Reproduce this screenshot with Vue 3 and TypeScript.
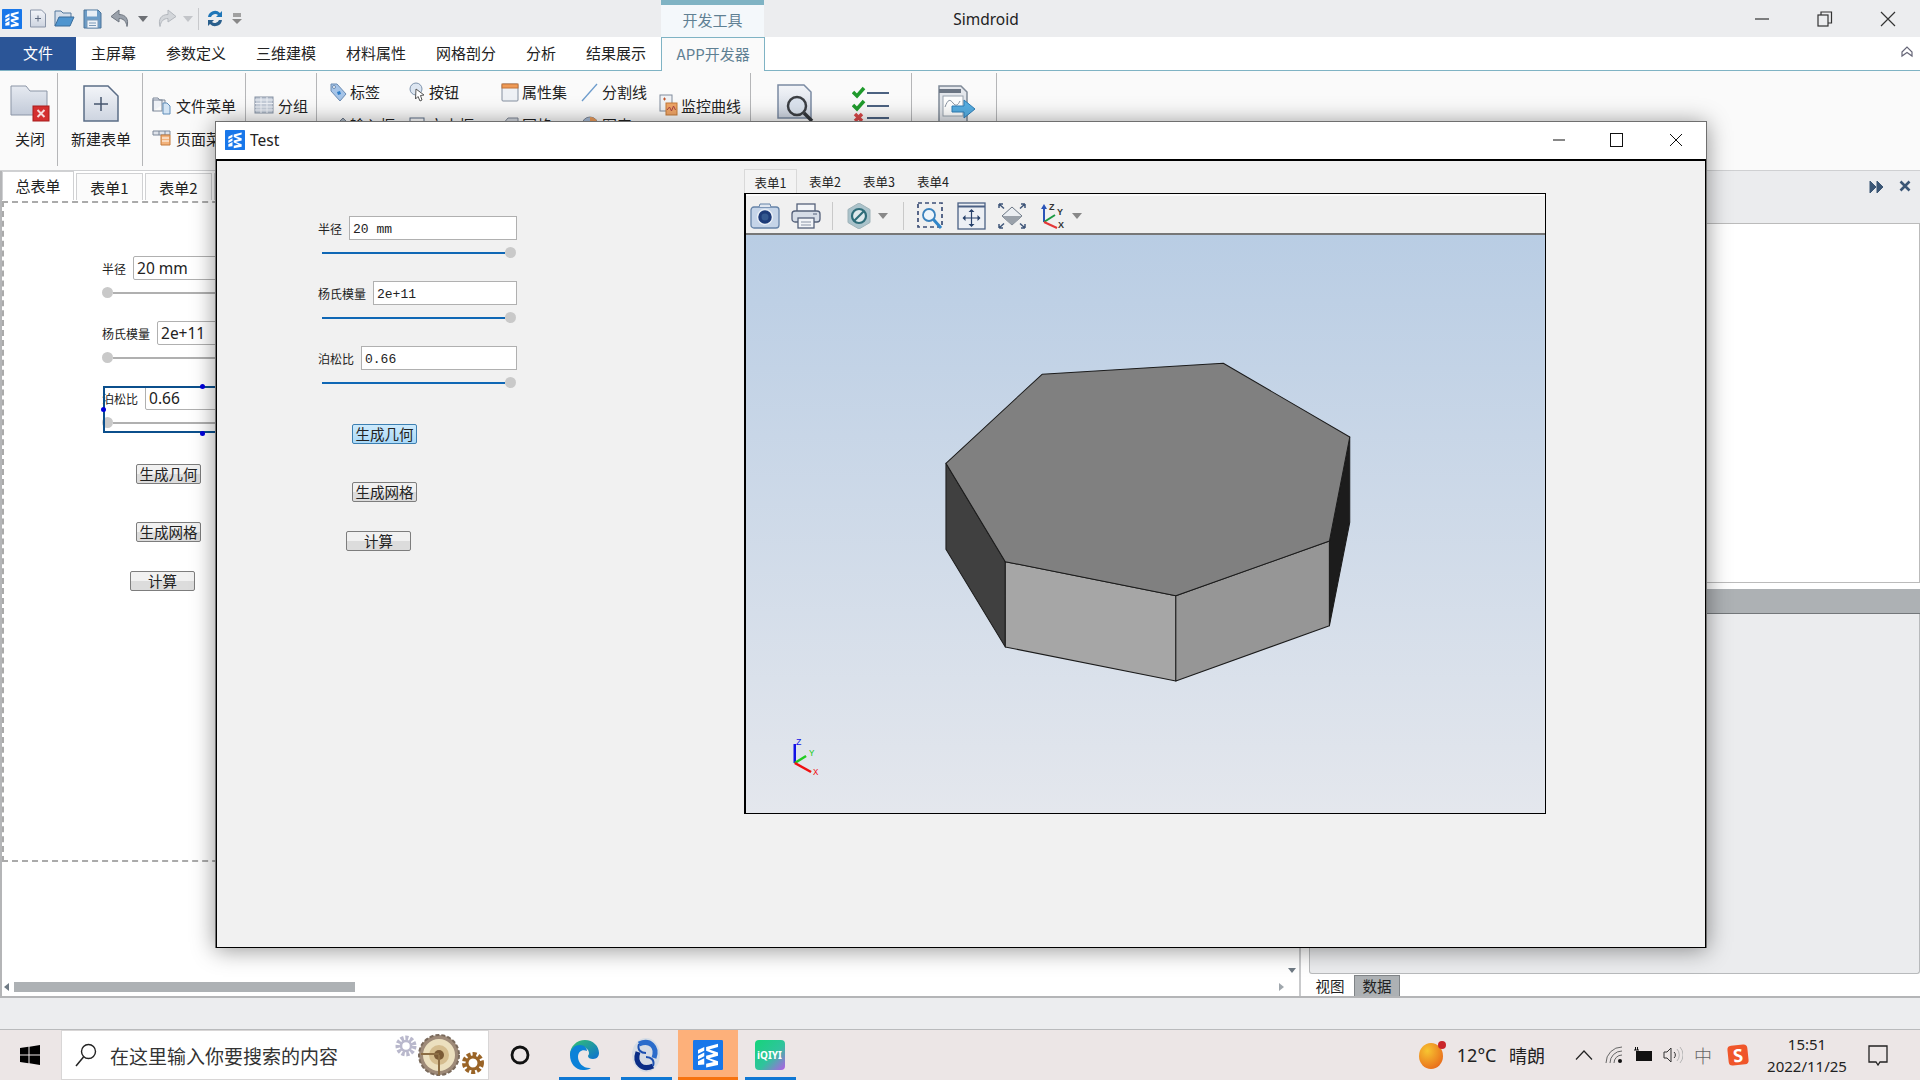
<script setup lang="ts">
interface Field { label: string; back: string; front: string }
const fields: Field[] = [
  { label: '半径', back: '20 mm', front: '20 mm' },
  { label: '杨氏模量', back: '2e+11', front: '2e+11' },
  { label: '泊松比', back: '0.66', front: '0.66' },
]
const menus = ['主屏幕', '参数定义', '三维建模', '材料属性', '网格剖分', '分析', '结果展示']
const backTabs = ['总表单', '表单1', '表单2']
const viewTabs = ['表单1', '表单2', '表单3', '表单4']
</script>

<template>
  <div class="screen">
    <svg class="defs" width="0" height="0" aria-hidden="true">
      <defs>
        <linearGradient id="paper" x1="0" y1="0" x2="0" y2="1">
          <stop offset="0" stop-color="#f3f5f9" />
          <stop offset="1" stop-color="#cdd4e0" />
        </linearGradient>
        <linearGradient id="folder" x1="0" y1="0" x2="0" y2="1">
          <stop offset="0" stop-color="#e6eaf1" />
          <stop offset="1" stop-color="#c2cad8" />
        </linearGradient>
        <linearGradient id="edge" x1="0" y1="0" x2="1" y2="1">
          <stop offset="0" stop-color="#36c46f" />
          <stop offset="1" stop-color="#0b6fd3" />
        </linearGradient>
        <radialGradient id="sun" cx=".35" cy=".3" r=".8">
          <stop offset="0" stop-color="#f7c531" />
          <stop offset="1" stop-color="#e8681a" />
        </radialGradient>
        <symbol id="logo" viewBox="0 0 24 24">
          <rect width="24" height="24" rx="1" fill="#1877ea" />
          <path fill="#fff" d="M4 8l5-2.500v3L4 11zM4 12.500l5-2.500v3l-5 2.500zM4 17l5-2.500v5L4 20zM10.500 5.500L20 3v2.500l-7 2 7 2.500v2.500l-7 2 7 2.500V20l-9.500 2v-3l6-1.500-6-2.500v-2.500l6-1.500-6-2.500z" />
        </symbol>
      </defs>
    </svg>

    <!-- title bar -->
    <header class="titlebar">
      <div class="quick">
        <svg class="q-logo" width="20" height="20"><use href="#logo" /></svg>
        <svg class="q-new" width="18" height="19" viewBox="0 0 18 19"><path d="M1.500 1h11l4 4v13h-15z" fill="url(#paper)" stroke="#8a95a8" /><path d="M9 6.500v6M6 9.500h6" stroke="#5f6b80" /></svg>
        <svg class="q-open" width="21" height="19" viewBox="0 0 21 19"><path d="M1 17V2h6l2 2h8v4" fill="#d4deea" stroke="#55789c" /><path d="M1 17l4-9h15l-4 9z" fill="#4f95cf" stroke="#3a6d9b" /></svg>
        <svg class="q-save" width="19" height="20" viewBox="0 0 19 20"><path d="M1 1h14l3 3v15H1z" fill="#6c9cc7" stroke="#4a7398" /><rect x="4" y="1.500" width="10" height="6" fill="#e8eef5" /><rect x="4" y="11" width="11" height="8" fill="#eef2f7" stroke="#7a99b8" /><path d="M6 14h7M6 16.500h7" stroke="#7a99b8" /></svg>
        <svg class="q-undo" width="20" height="19" viewBox="0 0 20 19"><path d="M9 1L1 7.500 9 13V9.500c4 0 7 2 8 8 2-7-1-12-8-12z" fill="#9aa1ab" stroke="#6f7680" /></svg>
        <i class="tri dark q-d1"></i>
        <svg class="q-redo" width="20" height="19" viewBox="0 0 20 19"><path d="M11 1l8 6.500L11 13V9.500c-4 0-7 2-8 8-2-7 1-12 8-12z" fill="#d3d6da" stroke="#b3b7bd" /></svg>
        <i class="tri pale q-d2"></i>
        <span class="q-sep"></span>
        <svg class="q-refresh" width="18" height="21" viewBox="0 0 18 21"><path d="M2 9a7 7 0 0 1 12-4l2-2v6h-6l2-2a4.500 4.500 0 0 0-7 2z" fill="#1f76b8" /><path d="M16 12a7 7 0 0 1-12 4l-2 2v-6h6l-2 2a4.500 4.500 0 0 0 7-2z" fill="#2a5f8c" /></svg>
        <svg class="q-more" width="10" height="14" viewBox="0 0 10 14"><path d="M1 2h8M1 4h8" stroke="#888" stroke-width="1.500" /><path d="M0 7h10l-5 5z" fill="#888" /></svg>
      </div>
      <div class="context-tab">开发工具</div>
      <div class="app-title">Simdroid</div>
      <div class="win-ctrl">
        <span><svg width="16" height="16"><path d="M1 8h14" stroke="#333" stroke-width="1.200" /></svg></span>
        <span><svg width="16" height="16"><rect x="1" y="4" width="10" height="11" fill="none" stroke="#333" stroke-width="1.200" /><path d="M4 4V1h10.500v11H11" fill="none" stroke="#333" stroke-width="1.200" /></svg></span>
        <span><svg width="16" height="16"><path d="M1 1l14 14M15 1L1 15" stroke="#333" stroke-width="1.200" /></svg></span>
      </div>
    </header>

    <!-- menu -->
    <nav class="menubar">
      <div class="menu-file">文件</div>
      <div v-for="m in menus" :key="m" class="menu-item">{{ m }}</div>
      <div class="menu-active">APP开发器</div>
      <svg class="collapse" width="12" height="12" viewBox="0 0 12 12"><path d="M1 6L6 1l5 5v4L6 6.500 1 10z" fill="none" stroke="#667" stroke-width="1.200" /></svg>
    </nav>

    <!-- ribbon -->
    <section class="ribbon">
      <div class="group g1">
        <svg width="40" height="37" viewBox="0 0 40 37"><path d="M1 30V1h15l4 5h17v24z" fill="url(#folder)" stroke="#8b95a6" /><rect x="23" y="21" width="16" height="15" fill="#d42f2f" stroke="#a81d1d" /><path d="M27.500 25l7 7M34.500 25l-7 7" stroke="#f6dada" stroke-width="2" /></svg>
        <span class="big-label">关闭</span>
      </div>
      <div class="group g2">
        <svg width="36" height="37" viewBox="0 0 36 37"><path d="M1 1h24l10 10v25H1z" fill="url(#paper)" stroke="#5b6d87" stroke-width="1.500" /><path d="M18 12v14M11 19h14" stroke="#46566e" stroke-width="1.500" /></svg>
        <span class="big-label">新建表单</span>
      </div>
      <div class="group g3">
        <div class="rb-item"><svg width="20" height="20" viewBox="0 0 20 20"><path d="M1 16V3h5l1.500 2H13v3" fill="#eef1f6" stroke="#7d8899" /><rect x="1" y="5" width="9" height="11" fill="none" stroke="#7d8899" /><path d="M11 8h4l3 3v8h-7z" fill="#d3e4f4" stroke="#5e8cb8" /></svg>文件菜单</div>
        <div class="rb-item"><svg width="20" height="20" viewBox="0 0 20 20"><path d="M1 3h17v4H1z" fill="#dfe3ea" stroke="#7d8899" /><path d="M7 3v4M13 3v4" stroke="#7d8899" /><path d="M9 7h9v10H9z" fill="#f3b27a" stroke="#c27b3c" /><path d="M10 10h7M10 13h7" stroke="#fff" /></svg>页面菜单</div>
      </div>
      <div class="group g4">
        <div class="rb-item"><svg width="20" height="20" viewBox="0 0 20 20"><rect x="1" y="2" width="18" height="16" fill="#c5cdd9" stroke="#8490a2" /><path d="M1 5h18M7 2v16M13 2v16M1 8.500h18M1 12h18M1 15h18" stroke="#eef1f6" /></svg>分组</div>
      </div>
      <div class="group g5">
        <div class="rb-grid">
          <div class="rb-cell"><svg width="18" height="20" viewBox="0 0 18 20"><path d="M2 2h6l9 10-6 7-9-10z" fill="#a5c4e8" stroke="#6b8bb2" /><circle cx="5" cy="5" r="1.500" fill="#fff" stroke="#6b8bb2" /><path d="M8 10l3-1 1 3-3 1z" fill="#2f7fc9" /></svg>标签</div>
          <div class="rb-cell"><svg width="18" height="20" viewBox="0 0 18 20"><circle cx="8" cy="7" r="6" fill="#dde6f1" stroke="#7e94ad" /><path d="M8 7l8 6-3.500.5L14 18l-2 1-2-4.500-2.500 2.500z" fill="#fff" stroke="#555" /></svg>按钮</div>
          <div class="rb-cell"><svg width="18" height="20" viewBox="0 0 18 20"><rect x="1" y="2" width="16" height="17" rx="1" fill="#eef1f5" stroke="#8590a0" /><rect x="1" y="2" width="16" height="4" fill="#ef9a56" stroke="#c2753a" /></svg>属性集</div>
          <div class="rb-cell"><svg width="18" height="20" viewBox="0 0 18 20"><path d="M1 19L16 2" stroke="#6d9ccc" stroke-width="1.300" /></svg>分割线</div>
          <div class="rb-cell"><svg width="18" height="20" viewBox="0 0 18 20"><path d="M2 18l2-5L14 3l3 3L7 16z" fill="#a9b4c2" stroke="#6f7b8c" /></svg>输入框</div>
          <div class="rb-cell"><svg width="18" height="20" viewBox="0 0 18 20"><rect x="2" y="3" width="14" height="14" fill="#fff" stroke="#5d6f88" /><path d="M6 7h6M9 7v7" stroke="#5d6f88" /></svg>文本框</div>
          <div class="rb-cell"><svg width="18" height="20" viewBox="0 0 18 20"><path d="M1 10l6-7h10v12H1z" fill="#d5d9e0" stroke="#7e8796" /></svg>网格</div>
          <div class="rb-cell"><svg width="18" height="20" viewBox="0 0 18 20"><circle cx="9" cy="10" r="8" fill="#a8bdd8" stroke="#7e8796" /><path d="M9 10V2a8 8 0 0 1 8 8z" fill="#ed9c5a" /></svg>图表</div>
        </div>
        <div class="rb-item monitor"><svg width="19" height="22" viewBox="0 0 19 22"><rect x="1" y="1" width="12" height="16" fill="#f1f3f6" stroke="#808b9c" /><path d="M4 5h3M5.500 3.500v3" stroke="#c2562d" /><rect x="7" y="9" width="11" height="12" fill="#f0a566" stroke="#c47a38" /><path d="M8 16l2.500-3 2 4 2-5 2 4" fill="none" stroke="#a44" /></svg>监控曲线</div>
      </div>
      <div class="group g6">
        <svg width="38" height="38" viewBox="0 0 38 38"><path d="M1 1h26l7 7v26H1z" fill="url(#paper)" stroke="#7b8ba3" stroke-width="1.500" /><circle cx="20" cy="22" r="9" fill="#dbe3ee" stroke="#3c3f44" stroke-width="2.500" /><path d="M27 29l8 8" stroke="#33363b" stroke-width="3.500" /></svg>
        <svg class="check" width="38" height="36" viewBox="0 0 38 36"><path d="M1 6l4 4 7-8" fill="none" stroke="#1f9a2c" stroke-width="3.500" /><path d="M1 19l4 4 7-8" fill="none" stroke="#1f9a2c" stroke-width="3.500" /><path d="M3 28l7 7M10 28l-7 7" stroke="#d84848" stroke-width="3.500" /><path d="M15 7h22M15 20h22M15 32h22" stroke="#4c6281" stroke-width="2" /></svg>
      </div>
      <div class="group g7">
        <svg width="38" height="38" viewBox="0 0 38 38"><path d="M1 1h22l6 6v30H1z" fill="#e3e6eb" stroke="#808a98" stroke-width="1.500" /><path d="M1 6h22" stroke="#6c7684" stroke-width="4" /><rect x="5" y="11" width="20" height="20" fill="#fff" stroke="#9aa3af" /><path d="M7 22c3-8 5-8 8-4s5 2 7-2" fill="none" stroke="#8b95a3" /><path d="M14 21h12v-6l11 9-11 9v-6H14z" fill="#57aee2" stroke="#2f7fb8" /></svg>
      </div>
    </section>

    <!-- body behind the dialog -->
    <main class="body">
      <section class="left-pane">
        <div class="back-tabs">
          <div v-for="(t, i) in backTabs" :key="t" class="back-tab" :class="{ on: i === 0 }">{{ t }}</div>
          <div class="back-tab stub"></div>
        </div>
        <div class="canvas">
          <div class="form back">
            <div v-for="(f, i) in fields" :key="f.label" class="field" :class="{ selected: i === 2 }">
              <div class="field-top">
                <span class="label">{{ f.label }}</span>
                <span class="value">{{ f.back }}</span>
              </div>
              <div class="slider"><i class="thumb"></i><i class="track"></i></div>
              <template v-if="i === 2">
                <i class="sel-box"></i>
                <i class="grip top"></i><i class="grip side"></i><i class="grip bottom"></i>
              </template>
            </div>
            <button class="btn b1">生成几何</button>
            <button class="btn b2">生成网格</button>
            <button class="btn b3">计算</button>
          </div>
        </div>
        <div class="hscroll-zone">
          <div class="arrow-down"></div>
          <div class="hscroll">
            <i class="arr-l"></i>
            <i class="scroll-thumb"></i>
            <i class="arr-r"></i>
          </div>
        </div>
      </section>
      <section class="right-pane">
        <div class="rp-head">
          <svg width="15" height="14" viewBox="0 0 15 14"><path d="M1 1l6 6-6 6zM8 1l6 6-6 6z" fill="#3b5675" stroke="#3b5675" /></svg>
          <svg width="12" height="12" viewBox="0 0 12 12"><path d="M1.500 1.500l9 9M10.500 1.500l-9 9" stroke="#3b5675" stroke-width="2.600" /></svg>
        </div>
        <div class="rp-panel"></div>
        <div class="rp-bar"></div>
        <div class="rp-rest"></div>
        <div class="rp-tabs">
          <span class="rp-tab">视图</span>
          <span class="rp-tab on">数据</span>
        </div>
      </section>
    </main>

    <footer class="status"></footer>

    <!-- taskbar -->
    <div class="taskbar">
      <div class="start"><svg width="20" height="20" viewBox="0 0 20 20"><path d="M0 3l8.500-1.200V9.500H0zM9.500 1.700L20 0v9.500H9.500zM0 10.500h8.500v7.700L0 17zM9.500 10.500H20V20L9.500 18.300z" fill="#000" /></svg></div>
      <div class="search">
        <svg width="24" height="26" viewBox="0 0 24 26"><circle cx="14.500" cy="9.500" r="7" fill="none" stroke="#222" stroke-width="1.400" /><path d="M9.500 15L2 24" stroke="#222" stroke-width="1.500" /></svg>
        <span class="search-text">在这里输入你要搜索的内容</span>
        <svg class="gears" width="92" height="48" viewBox="0 0 92 48">
          <circle cx="12" cy="15" r="8" fill="none" stroke="#b9b8cc" stroke-width="5" stroke-dasharray="3 1.600" />
          <circle cx="12" cy="15" r="5" fill="none" stroke="#b9b8cc" stroke-width="2.500" />
          <circle cx="45" cy="24" r="20" fill="#9e8a78" stroke="#7a6a5c" stroke-width="2" stroke-dasharray="4 2" />
          <circle cx="45" cy="24" r="16" fill="#ece0bf" />
          <circle cx="45" cy="24" r="10" fill="#d5bd8f" />
          <circle cx="45" cy="24" r="5" fill="#7a5a36" />
          <path d="M27 23h18M45 24v20" stroke="#8c6d44" stroke-width="2" />
          <circle cx="79" cy="32" r="8" fill="none" stroke="#9a6427" stroke-width="6" stroke-dasharray="3.500 1.800" />
          <circle cx="79" cy="32" r="6" fill="none" stroke="#9a6427" stroke-width="3" />
        </svg>
      </div>
      <div class="cortana"><svg width="22" height="22"><circle cx="11" cy="11" r="8" fill="none" stroke="#111" stroke-width="2.800" /></svg></div>
      <div class="task t-edge">
        <svg width="32" height="32" viewBox="0 0 32 32"><path d="M2 16C2 7 9 1 17 1c8 0 14 6 14 13 0 3-2 6-6 6-3 0-5-1-5-3 0-1 1-1 1-3 0-3-3-6-7-6-6 0-10 5-10 10z" fill="url(#edge)" /><path d="M2 16c0-5 4-10 10-10 4 0 7 3 7 6-5-2-9 1-9 6 0 6 6 12 13 11-3 2-6 2-8 2C7 31 2 24 2 16z" fill="#0c82d8" /></svg>
      </div>
      <div class="task t-360">
        <svg width="30" height="36" viewBox="0 0 30 36"><ellipse cx="15" cy="18" rx="14" ry="17" fill="#d6dce4" /><path d="M8 7C19 2 27 10 23 21" fill="none" stroke="#2a6ccb" stroke-width="5" /><path d="M22 29C11 34 3 26 7 15" fill="none" stroke="#0a2d86" stroke-width="5" /><path d="M8 7c-2 6 2 9 7 9M22 29c2-6-2-9-7-9" fill="none" stroke="#1b4fb0" stroke-width="2" /></svg>
      </div>
      <div class="task t-sim"><svg width="30" height="30"><use href="#logo" /></svg></div>
      <div class="task t-iq"><span class="iq-badge">iQIYI</span></div>
      <div class="tray">
        <svg class="sun" width="28" height="30" viewBox="0 0 28 30"><ellipse cx="13" cy="16" ry="13" rx="12" fill="url(#sun)" /><circle cx="24" cy="5" r="4" fill="#c9252a" /></svg>
        <span class="temp">12°C</span>
        <span class="weather">晴朗</span>
        <svg class="chev" width="18" height="10" viewBox="0 0 18 10"><path d="M1 9.500L9 1l8 8.500" fill="none" stroke="#222" stroke-width="1.200" /></svg>
        <svg class="wifi" width="18" height="18" viewBox="0 0 18 18"><path d="M1 17A16 16 0 0 1 17 1M5 17A12 12 0 0 1 17 5M9 17a8 8 0 0 1 8-8" fill="none" stroke="#666" stroke-width="1" /><circle cx="15" cy="15" r="2" fill="#111" /></svg>
        <svg class="batt" width="20" height="16" viewBox="0 0 20 16"><rect x="3.500" y="4.500" width="15" height="9" fill="#111" stroke="#111" /><path d="M1 3h5M2.500 0v3M4.500 0v3" stroke="#111" /></svg>
        <svg class="spk" width="20" height="18" viewBox="0 0 20 18"><path d="M1 6h3l4-4v14l-4-4H1z" fill="none" stroke="#333" /><path d="M11 6a4 4 0 0 1 0 6" fill="none" stroke="#333" /><path d="M14 3a9 9 0 0 1 0 12M17 1a12 12 0 0 1 0 16" fill="none" stroke="#b5b5b5" /></svg>
        <span class="ime">中</span>
        <span class="sogou">S</span>
        <div class="clock"><span>15:51</span><span>2022/11/25</span></div>
        <svg class="notif" width="20" height="21" viewBox="0 0 20 21"><path d="M1 1h18v16h-7l-2 3-2-3H1z" fill="none" stroke="#222" stroke-width="1.300" /></svg>
      </div>
    </div>

    <!-- dialog -->
    <div class="dialog">
      <div class="dlg-title">
        <svg width="20" height="20"><use href="#logo" /></svg>
        <span class="dlg-name">Test</span>
        <div class="dlg-ctrl">
          <span><svg width="14" height="14"><path d="M1 7h12" stroke="#111" /></svg></span>
          <span><svg width="14" height="14"><rect x=".5" y=".5" width="12" height="13" fill="none" stroke="#111" /></svg></span>
          <span><svg width="14" height="14"><path d="M1 1l12 12M13 1L1 13" stroke="#111" /></svg></span>
        </div>
      </div>
      <div class="dlg-body">
        <div class="form front">
          <div v-for="f in fields" :key="f.label" class="field">
            <div class="field-top">
              <span class="label">{{ f.label }}</span>
              <span class="value">{{ f.front }}</span>
            </div>
            <div class="slider"><i class="track"></i><i class="thumb"></i></div>
          </div>
          <button class="btn b1 hot">生成几何</button>
          <button class="btn b2">生成网格</button>
          <button class="btn b3">计算</button>
        </div>
        <div class="view-col">
          <div class="view-tabs">
            <span v-for="(t, i) in viewTabs" :key="t" class="view-tab" :class="{ on: i === 0 }">{{ t }}</span>
          </div>
          <div class="viewer">
            <div class="vtools">
              <svg class="vt" width="30" height="26" viewBox="0 0 30 26"><rect x="1" y="4" width="28" height="21" rx="3" fill="#c5d4e8" stroke="#6583a8" stroke-width="1.300" /><path d="M9 4l1-3h10l1 3" fill="#dfe6f0" stroke="#6583a8" /><circle cx="15" cy="14" r="7.500" fill="#1d3b78" stroke="#e8eef6" stroke-width="1.500" /><circle cx="15" cy="14" r="3.500" fill="#34588f" /></svg>
              <svg class="vt" width="30" height="26" viewBox="0 0 30 26"><rect x="6" y="1" width="18" height="8" fill="#f3f5f8" stroke="#55617a" stroke-width="1.300" /><rect x="1" y="8" width="28" height="11" rx="3" fill="#d6dde7" stroke="#55617a" stroke-width="1.300" /><rect x="7" y="15" width="16" height="10" fill="#f3f5f8" stroke="#55617a" stroke-width="1.300" /><path d="M10 19h10M10 22h10" stroke="#8a94a6" /><path d="M22 11h4" stroke="#55617a" /></svg>
              <i class="vsep"></i>
              <svg class="vt" width="30" height="26" viewBox="0 0 30 26"><path d="M15 0l11 6.500v13L15 26 4 19.500v-13z" fill="#aac3cb" stroke="#9eb2b8" /><circle cx="15" cy="13" r="7" fill="#dfe9ec" stroke="#2f6d79" stroke-width="2.200" /><path d="M10 18l10-10" stroke="#2f6d79" stroke-width="2.200" /></svg>
              <i class="tri vdrop"></i>
              <i class="vsep"></i>
              <svg class="vt" width="30" height="28" viewBox="0 0 30 28"><rect x="3" y="1" width="24" height="24" fill="none" stroke="#3d4f77" stroke-width="1.700" stroke-dasharray="4 3" /><circle cx="14" cy="13" r="6" fill="#eef5fb" stroke="#3b82bd" stroke-width="1.800" /><path d="M18.500 17.500L26 26" stroke="#2f85c9" stroke-width="3" /></svg>
              <svg class="vt" width="30" height="28" viewBox="0 0 30 28"><rect x="2" y="1" width="27" height="26" fill="#eceff4" stroke="#4c6185" stroke-width="1.300" /><path d="M2 4.500h27" stroke="#4c6185" stroke-width="2" /><path d="M15.500 8v16M7.500 16h16" stroke="#26406a" stroke-width="1.200" /><path d="M15.500 7l-3 3h6zM15.500 25l-3-3h6zM6.500 16l3-3v6zM24.500 16l-3-3v6z" fill="#26406a" /></svg>
              <svg class="vt" width="30" height="28" viewBox="0 0 30 28"><path d="M15 5l10 9-10 9-10-9z" fill="#ebeef2" stroke="#6a7684" /><path d="M5 14h20l-10 9z" fill="#9aa1aa" /><path d="M2 2l5 4.500M2 2v4M2 2h4M28 2l-5 4.500M28 2v4M28 2h-4M2 26l5-4.500M2 26v-4M2 26h4M28 26l-5-4.500M28 26v-4M28 26h-4" fill="none" stroke="#3f5679" stroke-width="1.500" /></svg>
              <svg class="vt" width="30" height="28" viewBox="0 0 30 28"><path d="M6 20V6" stroke="#2a54b8" stroke-width="2" /><path d="M6 2l-3 5h6z" fill="#2a54b8" /><path d="M6 20l11-7" stroke="#1a9a42" stroke-width="2" /><path d="M6 20l13 6" stroke="#e33737" stroke-width="2" /><text x="11" y="8" class="ax">Z</text><text x="19" y="13" class="ax">Y</text><text x="20" y="26" class="ax">X</text></svg>
              <i class="tri vdrop"></i>
            </div>
            <div class="viewport">
              <svg class="scene" viewBox="746 235 798 578" preserveAspectRatio="none">
                <g stroke="#1b1b1b" stroke-width="1" stroke-linejoin="round">
                  <polygon points="945.700,463.300 1005,561.700 1005,647 945.700,549.300" fill="#404040" />
                  <polygon points="1005,561.700 1175.300,595.700 1175.300,681 1005,647" fill="#a6a6a6" />
                  <polygon points="1175.300,595.700 1328.700,541 1328.700,625.700 1175.300,681" fill="#969696" />
                  <polygon points="1328.700,541 1349,437 1349,522.300 1328.700,625.700" fill="#1c1c1c" />
                  <polygon points="1041.700,374.300 1222.700,363.300 1349,437 1328.700,541 1175.300,595.700 1005,561.700 945.700,463.300" fill="#808080" />
                </g>
                <path d="M794.700 763V744" stroke="#1212e6" stroke-width="2.500" />
                <path d="M794.700 763L806 756" stroke="#22cc22" stroke-width="2.500" />
                <path d="M794.700 763L811 772" stroke="#f01010" stroke-width="2.500" />
                <text x="796" y="745" class="tr" fill="#1212e6">Z</text>
                <text x="809" y="756" class="tr" fill="#22cc22">Y</text>
                <text x="813" y="775" class="tr" fill="#f01010">X</text>
              </svg>
            </div>
          </div>
        </div>
      </div>
    </div>
  </div>
</template>

<style>
html, body { margin: 0; padding: 0; background: #fff; overflow: hidden; }
</style>

<style scoped>
.screen {
  position: relative;
  width: 1920px;
  height: 1080px;
  display: flex;
  flex-direction: column;
  overflow: hidden;
  background: #fff;
  color: #222;
  font-family: "Noto Sans CJK SC", "Noto Sans", sans-serif;
  font-size: 15px;
}
.defs { position: absolute; }
svg { display: block; flex: none; }
i { display: block; font-style: normal; }

/* title bar */
.titlebar { height: 37px; background: #ecedef; display: flex; flex: none; }
.quick { width: 661px; display: flex; align-items: center; position: relative; padding-left: 2px; box-sizing: border-box; }
.q-new { margin-left: 7px; }
.q-open { margin-left: 7px; }
.q-save { margin-left: 8px; }
.q-undo { margin-left: 8px; }
.q-d1 { margin-left: 8px; }
.q-redo { margin-left: 9px; }
.q-d2 { margin-left: 6px; }
.q-sep { width: 1px; height: 22px; background: #c8c9cc; margin-left: 5px; }
.q-refresh { margin-left: 7px; }
.q-more { margin-left: 8px; }
.tri { width: 0; height: 0; border-left: 5px solid transparent; border-right: 5px solid transparent; border-top: 6px solid #888; }
.tri.dark { border-top-color: #6d7075; }
.tri.pale { border-top-color: #c3c5c9; }
.context-tab {
  width: 103px; box-sizing: border-box; background: #f4f8fb; border-top: 5px solid #7fb3c4;
  color: #5f8093; text-align: center; line-height: 30px; font-size: 15px;
}
.app-title { width: 444px; text-align: center; line-height: 38px; font-family: "Noto Sans", sans-serif; font-size: 15.500px; color: #222; }
.win-ctrl { margin-left: auto; margin-right: 1px; display: flex; }
.win-ctrl span { width: 63px; height: 37px; display: flex; align-items: center; justify-content: center; }

/* menu */
.menubar { height: 34px; box-sizing: border-box; display: flex; flex: none; border-bottom: 1px solid #7fb3c4; background: #fff; align-items: stretch; position: relative; }
.menu-file { width: 76px; background: #2b5597; color: #fff; text-align: center; line-height: 32px; }
.menu-item { padding: 0 15px; line-height: 32px; color: #222; }
.menu-active {
  width: 104px; box-sizing: border-box; margin-bottom: -1px; background: #fafafa; border: 1px solid #7fb3c4; border-bottom: 0;
  color: #5f8093; text-align: center; line-height: 32px;
}
.collapse { position: absolute; right: 7px; top: 9px; }

/* ribbon */
.ribbon { height: 100px; box-sizing: border-box; flex: none; background: #fafafa; border-bottom: 1px solid #cfd0d2; display: flex; padding: 2px 0 4px; }
.group { box-sizing: border-box; border-right: 1px solid #b5b6b8; font-size: 15px; flex: none; }
.g1, .g2 { display: flex; flex-direction: column; align-items: center; padding-top: 12px; }
.big-label { margin-top: 6px; line-height: 22px; }
.g1 { width: 58px; padding-left: 3px; }
.g2 { width: 85px; padding-left: 2px; }
.g3 { width: 103px; padding: 20px 0 0 9px; display: flex; flex-direction: column; gap: 9px; }
.g4 { width: 71px; padding: 20px 0 0 8px; }
.g5 { width: 434px; padding: 2px 0 0 12px; display: flex; }
.g6 { width: 161px; display: flex; gap: 37px; padding: 11px 0 0 26px; }
.check { margin-top: 2px; }
.g7 { width: 85px; padding: 12px 0 0 26px; }
.rb-item { display: flex; align-items: center; gap: 4px; height: 24px; white-space: nowrap; }
.rb-grid { display: grid; grid-template-columns: 79px 93px 80px 78px; grid-auto-rows: 33px; }
.rb-cell { display: flex; align-items: center; gap: 3px; white-space: nowrap; }
.monitor { margin-top: 18px; gap: 3px; }

/* body */
.body { flex: 1; display: flex; min-height: 0; }
.left-pane { width: 1301px; box-sizing: border-box; flex: none; display: flex; flex-direction: column; border-left: 2px solid #b4b5b7; border-right: 2px solid #c9cacc; background: #fff; }
.back-tabs { height: 30px; display: flex; align-items: flex-end; flex: none; gap: 2px; padding-bottom: 1px; box-sizing: border-box; }
.back-tab { width: 67px; height: 27px; box-sizing: border-box; border: 1px solid #d0d1d3; border-bottom: 0; text-align: center; line-height: 27px; background: #fbfbfb; }
.back-tab.on { width: 72px; height: 29px; background: #fff; }
.back-tab.stub { width: 12px; }
.canvas { height: 661px; box-sizing: border-box; flex: none; border-top: 2px dashed #aaa; border-left: 2px dashed #aaa; border-bottom: 2px dashed #aaa; }

.form { display: flex; flex-direction: column; align-items: flex-start; }
.form.back { padding: 53px 0 0 98px; }
.form.front { padding: 55px 0 0 101px; width: 527px; box-sizing: border-box; flex: none; }
.field { width: 199px; height: 65px; position: relative; flex: none; }
.field-top { display: flex; align-items: center; gap: 7px; height: 24px; }
.label { font-size: 12px; color: #222; white-space: nowrap; }
.value { flex: 1; height: 24px; box-sizing: border-box; background: #fff; border: 1px solid #b0b0b0; padding-left: 3px; line-height: 22px; }
.front .value { font-family: "Liberation Mono", monospace; font-size: 13px; line-height: 25px; }
.back .value { font-family: "Noto Sans", sans-serif; font-size: 15.500px; border-radius: 2px; }
.slider { display: flex; align-items: center; height: 11px; margin-top: 7px; }
.front .slider { margin-left: 4px; margin-right: 1px; }
.thumb { width: 11px; height: 11px; border-radius: 50%; background: #c9c9c9; flex: none; }
.track { flex: 1; height: 2px; background: #0f67b5; }
.back .track { height: 2px; background: #b0b0b0; }
.btn {
  display: block; width: 65px; height: 20px; padding: 0; box-sizing: border-box;
  border: 1px solid #7d7d7d; border-radius: 2px; font-family: inherit; font-size: 14.500px; line-height: 18px; color: #222;
  background: linear-gradient(#f1f1f1 0 50%, #dcdcdc 50% 100%);
}
.b1 { margin: 13px 0 0 34px; }
.b2 { margin: 38px 0 0 34px; }
.b3 { margin: 29px 0 0 28px; }
.btn.hot { background: linear-gradient(#cdeafc, #a9d9f8); border-color: #3c7fb1; }
.sel-box { position: absolute; left: 1px; top: 0; width: 260px; height: 47px; box-sizing: border-box; border: 2px solid #0b4f8c; }
.grip { position: absolute; width: 5px; height: 5px; background: #0000dd; border-radius: 50%; }
.grip.top { left: 98px; top: -2px; }
.grip.side { left: -1px; top: 21px; }
.grip.bottom { left: 98px; top: 45px; }

.hscroll-zone { flex: 1; display: flex; flex-direction: column; justify-content: flex-end; padding-bottom: 4px; }
.arrow-down { align-self: flex-end; margin: 0 3px 9px 0; width: 0; height: 0; border-left: 4px solid transparent; border-right: 4px solid transparent; border-top: 5px solid #6f7a84; }
.hscroll { display: flex; align-items: center; height: 10px; }
.arr-l { margin-left: 2px; width: 0; height: 0; border-top: 4px solid transparent; border-bottom: 4px solid transparent; border-right: 5px solid #6f7a84; }
.scroll-thumb { margin-left: 5px; width: 341px; height: 10px; background: #adb1b4; }
.arr-r { margin-left: auto; margin-right: 15px; width: 0; height: 0; border-top: 4px solid transparent; border-bottom: 4px solid transparent; border-left: 5px solid #a0a7ad; }

.right-pane { flex: 1; display: flex; flex-direction: column; padding-left: 8px; min-width: 0; }
.rp-head { height: 52px; flex: none; background: #ebecee; display: flex; align-items: flex-start; justify-content: flex-end; gap: 15px; padding: 9px 9px 0 0; box-sizing: border-box; }
.rp-panel { height: 360px; flex: none; background: #fff; border: 1px solid #bbb; box-sizing: border-box; }
.rp-bar { height: 25px; margin-top: 6px; background: #adb1b4; border-bottom: 1px solid #73777a; box-sizing: border-box; flex: none; }
.rp-rest { height: 360px; flex: none; background: #ebecee; border: 1px solid #b8babc; border-top: 0; border-radius: 0 0 3px 3px; box-sizing: border-box; }
.rp-tabs { flex: 1; display: flex; align-items: flex-end; padding-left: 6px; gap: 9px; }
.rp-tab { width: 30px; font-size: 14.500px; line-height: 20px; text-align: center; }
.rp-tab.on { width: 46px; background: #adb1b4; border: 1px solid #808487; border-bottom: 0; box-sizing: border-box; }

.status { height: 34px; flex: none; box-sizing: border-box; background: #ecedef; border-top: 2px solid #b4b5b7; border-bottom: 1px solid #b9babc; }

/* taskbar */
.taskbar { height: 50px; flex: none; background: #ece6e6; display: flex; align-items: stretch; }
.start { width: 61px; box-sizing: border-box; padding-right: 2px; display: flex; align-items: center; justify-content: center; }
.search { width: 428px; box-sizing: border-box; background: #fff; border: 1px solid #d8d6d6; display: flex; align-items: center; padding: 0 2px 0 12px; position: relative; }
.search-text { margin-left: 12px; font-size: 19px; color: #333; white-space: nowrap; }
.gears { margin-left: auto; }
.cortana { width: 70px; box-sizing: border-box; padding-right: 8px; display: flex; align-items: center; justify-content: center; }
.task { width: 51px; box-sizing: border-box; border-bottom: 3px solid #0f78d4; display: flex; align-items: center; justify-content: center; margin-left: 11px; padding: 3px 2px 0 0; }
.t-edge { margin-left: 0; }
.t-sim { width: 60px; margin-left: 6px; padding-right: 0; background: #fdb07a; border-bottom-color: #f7730f; }
.t-iq { margin-left: 7px; }
.iq-badge { width: 30px; height: 30px; border-radius: 4px; background: linear-gradient(135deg, #16d47a, #2fc49c 55%, #b45ce8); color: #fff; font: 700 10px/30px "Noto Sans", sans-serif; text-align: center; }
.tray { margin-left: auto; display: flex; align-items: center; }
.temp { margin-left: 10.500px; font-size: 18px; font-family: "Noto Sans", sans-serif; }
.weather { margin-left: 12.500px; font-size: 18px; }
.chev { margin-left: 30px; }
.wifi { margin-left: 11.500px; }
.batt { margin-left: 10px; }
.spk { margin-left: 10px; }
.ime { margin-left: 11.500px; font-size: 18px; color: #666; font-weight: 300; }
.sogou { margin-left: 16px; width: 20px; height: 20px; border-radius: 4px; background: #f0562a; color: #fff; text-align: center; font: 700 18px/20px "Noto Sans", sans-serif; transform: rotate(-6deg); }
.clock { width: 90px; margin-left: 14px; display: flex; flex-direction: column; align-items: center; font-family: "Noto Sans", sans-serif; font-size: 15px; line-height: 22px; color: #222; }
.notif { margin: 0 32px 0 16px; }

/* dialog */
.dialog {
  position: absolute; left: 215px; top: 121px; width: 1492px; height: 827px; box-sizing: border-box;
  display: flex; flex-direction: column; background: #fff; border: 1px solid #6f6f6f; border-bottom: 0;
  box-shadow: 0 2px 22px rgba(0, 0, 0, .42);
}
.dlg-title { height: 37px; box-sizing: border-box; padding: 0 0 2px 9px; flex: none; display: flex; align-items: center; }
.dlg-name { margin-left: 5px; font-family: "Noto Sans", sans-serif; font-size: 15.500px; }
.dlg-ctrl { margin-left: auto; display: flex; }
.dlg-ctrl span { width: 58px; display: flex; align-items: center; justify-content: center; }
.dlg-ctrl span:last-child { margin: 0 1px; }
.dlg-body { flex: 1; display: flex; background: #f1f1f1; border: 1px solid #000; border-top-width: 2px; min-height: 0; }
.view-col { width: 802px; flex: none; padding-top: 8px; display: flex; flex-direction: column; }
.view-tabs { height: 24px; display: flex; flex: none; box-sizing: border-box; }
.view-tab { width: 54px; font-size: 12.500px; text-align: center; line-height: 25px; box-sizing: border-box; }
.view-tab.on { width: 53px; border: 1px solid #d9d9d9; border-bottom: 0; margin-right: 1px; background: #f3f3f3; }
.viewer { height: 621px; flex: none; box-sizing: border-box; border: 1px solid #000; border-left-width: 2px; display: flex; flex-direction: column; }
.vtools { height: 41px; flex: none; box-sizing: border-box; padding: 2px 0 0 4px; background: #f0f0f0; border-top: 2px solid #fafafa; border-bottom: 2px solid #777; display: flex; align-items: center; gap: 11px; }
.vsep { width: 1px; height: 28px; background: #c9c9c9; flex: none; }
.vdrop { margin-left: -7px; margin-right: 4px; }
.viewport { flex: 1; min-height: 0; background: linear-gradient(#b9cde4, #e4e7ed); }
.scene { width: 100%; height: 100%; }
.ax { font: 700 9px "Liberation Sans", sans-serif; fill: #333; }
.tr { font: 9px "Liberation Mono", monospace; }
</style>
